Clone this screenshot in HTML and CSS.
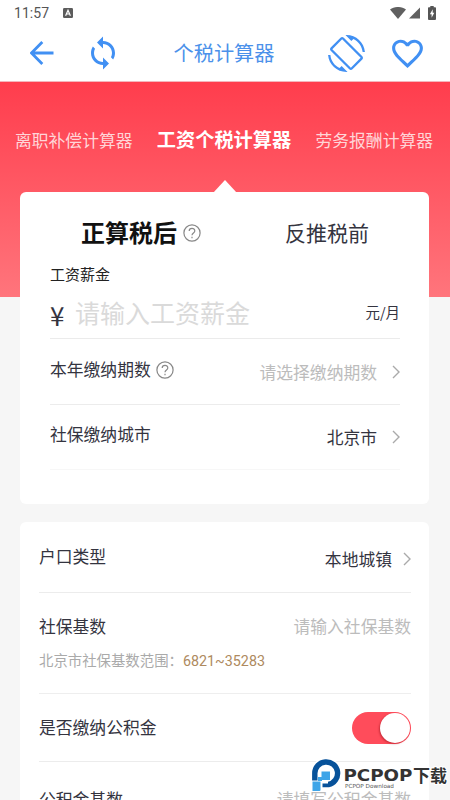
FILE: index.html
```html
<!DOCTYPE html>
<html lang="zh-CN">
<head>
<meta charset="utf-8">
<title>个税计算器</title>
<link rel="stylesheet" href="styles.css">
</head>
<body>
<div class="screen">
  <header class="top">
    <div class="status">
      <span class="clock">11:57</span>
      <svg class="badge" viewBox="0 0 10 10"><rect width="10" height="10" rx="1.2" fill="#5c5c5c"/><path d="M2.6 7.8 5 2.3l2.4 5.5M3.6 6h2.8" fill="none" stroke="#fff" stroke-width="1.2"/></svg>
      <span class="spacer"></span>
      <svg class="wifi" viewBox="0 0 16 12"><path d="M0 2.6C4.600-.9 11.400-.9 16 2.600L8 12z" fill="#606060"/></svg>
      <svg class="signal" viewBox="0 0 12 12"><path d="M12 0v12H0z" fill="#606060"/></svg>
      <svg class="battery" viewBox="0 0 8 14"><path d="M2.300 0h3.400v1.300H7.200q.8 0 .8.800V13q0 1-1 1H1q-1 0-1-1V2.100q0-.8.800-.8h1.500z" fill="#555"/><path d="M4.700 3.300 1.900 8.300h1.700v3.500l2.700-5H4.700z" fill="#fff"/></svg>
    </div>
    <nav class="nav">
      <svg class="back" viewBox="0 0 24 24"><path d="M23.500 12H1.800M12.300 1 1.500 12l10.800 11" fill="none" stroke="#4190f3" stroke-width="2.800"/></svg>
      <svg class="sync" viewBox="0 0 24 24"><path fill="#4190f3" d="M12 4V1L8 5l4 4V6c3.310 0 6 2.690 6 6 0 1.010-.25 1.970-.7 2.800l1.460 1.460C19.540 15.030 20 13.570 20 12c0-4.420-3.580-8-8-8zm0 14c-3.310 0-6-2.690-6-6 0-1.010.25-1.970.7-2.800L5.240 7.740C4.460 8.970 4 10.430 4 12c0 4.420 3.580 8 8 8v3l4-4-4-4v3z"/></svg>
      <h1 class="title">个税计算器</h1>
      <svg class="rotate" viewBox="0 0 24 24"><path fill="#4190f3" d="M16.480 2.520c3.270 1.550 5.610 4.720 5.970 8.480h1.500C23.440 4.840 18.290 0 12 0l-.66.03 3.810 3.810 1.330-1.320zm-6.250-.77c-.59-.59-1.540-.59-2.120 0L1.750 8.110c-.59.59-.59 1.540 0 2.120l12.020 12.020c.59.59 1.540.59 2.120 0l6.360-6.360c.59-.59.59-1.540 0-2.120L10.230 1.750zm4.600 19.440L2.810 9.170l6.360-6.360 12.020 12.020-6.360 6.360zm-7.310.29C4.250 19.940 1.910 16.760 1.550 13H.05C.56 19.160 5.710 24 12 24l.66-.03-3.810-3.810-1.330 1.320z"/></svg>
      <svg class="heart" viewBox="0 0 24 24"><path fill="#4190f3" d="M16.500 3c-1.740 0-3.410.81-4.500 2.090C10.910 3.810 9.240 3 7.500 3 4.420 3 2 5.420 2 8.500c0 3.780 3.400 6.860 8.550 11.540L12 21.350l1.450-1.320C18.600 15.360 22 12.280 22 8.500 22 5.420 19.580 3 16.500 3zm-4.400 15.550-.1.100-.1-.1C7.140 14.240 4 11.390 4 8.500 4 6.500 5.500 5 7.500 5c1.540 0 3.040.99 3.570 2.360h1.870C13.460 5.990 14.960 5 16.500 5c2 0 3.500 1.500 3.500 3.500 0 2.890-3.140 5.740-7.900 10.050z"/></svg>
    </nav>
  </header>

  <main class="page">
    <div class="tabs">
      <span class="tab">离职补偿计算器</span>
      <span class="tab tab-active">工资个税计算器</span>
      <span class="tab">劳务报酬计算器</span>
    </div>

    <section class="card salary">
      <div class="modes">
        <span class="mode-active">正算税后</span>
        <svg class="help" viewBox="0 0 18 18"><circle cx="9" cy="9" r="8.100"/><path d="M6.200 7.100C6.200 3.500 11.900 3.600 11.800 7 11.700 9 9 9 9 11.300M9 12.800v1.400"/></svg>
        <span class="mode">反推税前</span>
      </div>
      <div class="caption">工资薪金</div>
      <div class="amount">
        <span class="yen">¥</span>
        <span class="amount-hint">请输入工资薪金</span>
        <span class="unit">元/月</span>
      </div>
      <div class="row row-periods">
        <span class="label">本年缴纳期数</span>
        <svg class="help" viewBox="0 0 18 18"><circle cx="9" cy="9" r="8.100"/><path d="M6.200 7.100C6.200 3.500 11.900 3.600 11.800 7 11.700 9 9 9 9 11.300M9 12.800v1.400"/></svg>
        <span class="value hint">请选择缴纳期数</span>
        <svg class="chevron" viewBox="0 0 8 14"><path d="M1 1l6 6-6 6"/></svg>
      </div>
      <div class="row row-city">
        <span class="label">社保缴纳城市</span>
        <span class="value">北京市</span>
        <svg class="chevron" viewBox="0 0 8 14"><path d="M1 1l6 6-6 6"/></svg>
      </div>
    </section>

    <section class="card social">
      <div class="row row-household">
        <span class="label">户口类型</span>
        <span class="value">本地城镇</span>
        <svg class="chevron" viewBox="0 0 8 14"><path d="M1 1l6 6-6 6"/></svg>
      </div>
      <div class="base">
        <div class="base-line">
          <span class="base-label">社保基数</span>
          <span class="value hint">请输入社保基数</span>
        </div>
        <div class="range">北京市社保基数范围：<span class="range-num">6821~35283</span></div>
      </div>
      <div class="row row-fund">
        <span class="label">是否缴纳公积金</span>
        <span class="switch"><span class="knob"></span></span>
      </div>
      <div class="row row-fundbase">
        <span class="label">公积金基数</span>
        <span class="value hint">请填写公积金基数</span>
      </div>
    </section>
  </main>

  <svg class="watermark" viewBox="0 0 140 36">
    <path d="M4.800 19V15.500A11.400 11.400 0 1 1 17.500 26.500" fill="none" stroke="#fff" stroke-width="8"/>
    <path d="M4.800 22.500V15.500A11.400 11.400 0 1 1 18.500 26.500H12.500" fill="none" stroke="#07529a" stroke-width="5.400"/>
    <path d="M1 23h7v-5h3.500v-5H20.500v9H18v3.500H9.500V33H2v-7.500z" fill="#fff"/>
    <path d="M11.500 13.500H20v8.500H11.500zM8 19h4v4H8zM2.500 23.500h8v8.500q0 1-1 1h-7z" fill="#3ea5e8"/>
    <g stroke="#fff" stroke-width="2" paint-order="stroke">
      <text class="wm-name" x="33.500" y="23" textLength="69" lengthAdjust="spacingAndGlyphs">PCPOP</text>
      <text class="wm-cn" x="103" y="24" textLength="34" lengthAdjust="spacingAndGlyphs">下载</text>
      <text class="wm-sub" x="35" y="30" textLength="49" lengthAdjust="spacingAndGlyphs">PCPOP Download</text>
    </g>
  </svg>
</div>
</body>
</html>
```
FILE: styles.css
```css
* { box-sizing: border-box; }
html, body { margin: 0; }
body {
  width: 450px;
  height: 800px;
  overflow: hidden;
  font-family: "Noto Sans CJK SC", "Noto Sans", sans-serif;
  color: #34343f;
}
svg { display: block; flex: none; }
.screen {
  position: relative;
  width: 450px;
  height: 800px;
  overflow: hidden;
  background: #f6f6f6;
}
.top { height: 82px; background: #fff; border-bottom: 1px solid #f4b6bd; }
.status { display: flex; align-items: center; height: 25px; padding: 0 14px; }
.clock { font: 14px/20px Roboto, sans-serif; color: #555; letter-spacing: 0.05px; width: 49px; }
.badge { width: 10px; height: 10px; }
.spacer { flex: 1; }
.wifi { width: 16px; height: 12px; margin-right: 3px; }
.signal { width: 11px; height: 12px; margin: 1px 8px 0 0; }
.battery { width: 8px; height: 14px; }
.nav { display: flex; align-items: center; height: 56px; padding: 0 24px 0 30px; }
.back { width: 24px; height: 24px; }
.sync { width: 36px; height: 36px; margin-left: 31px; }
.title {
  flex: 1;
  margin: 0;
  padding-left: 52.5px;
  font-size: 20.2px;
  line-height: 30px;
  font-weight: 400;
  color: #4b91ea;
}
.rotate { width: 37px; height: 37px; margin-right: 24px; }
.heart { width: 37px; height: 37px; }

.page {
  height: 718px;
  padding: 0 21px 0 20px;
  background: linear-gradient(#ff3d4d, #ff757c) no-repeat 0 0 / 100% 215px;
}
.tabs {
  display: flex;
  justify-content: space-between;
  align-items: center;
  height: 110px;
  margin: 0 -4px 0 -5px;
  padding-top: 5px;
  white-space: nowrap;
}
.tab { font-size: 16.8px; color: #ffd5d8; }
.tab-active { font-size: 19.2px; font-weight: 700; color: #fff; padding-bottom: 2px; }

.card { background: #fff; border-radius: 6px; }
.salary { position: relative; height: 312px; padding: 10px 29px 0 30px; }
.salary::before {
  content: "";
  position: absolute;
  left: 193px;
  top: -12px;
  width: 24px;
  height: 13px;
  background: #fff;
  clip-path: polygon(50% 0, 100% 100%, 0 100%);
}
.modes { display: flex; align-items: center; height: 60px; padding-left: 31px; }
.mode-active { font-size: 24px; line-height: 36px; font-weight: 700; color: #111; }
.help { width: 18px; height: 18px; margin: 2px 0 0 6px; fill: none; stroke: #888; stroke-width: 1.2; }
.mode { margin-left: 84px; font-size: 21px; line-height: 30px; }
.caption { height: 24px; font-size: 15px; line-height: 24px; color: #222; }
.amount { display: flex; align-items: center; height: 53px; border-bottom: 1px solid #ebebeb; }
.yen { width: 25px; font-size: 26px; line-height: 36px; padding-top: 6px; }
.amount-hint { flex: 1; font-size: 25px; line-height: 36px; color: #dadada; }
.unit { font-size: 14.4px; line-height: 22px; }
.row { display: flex; align-items: center; border-bottom: 1px solid #ececec; }
.label { font-size: 16.8px; line-height: 24px; padding-bottom: 6px; }
.value { margin-left: auto; font-size: 16.8px; line-height: 24px; }
.hint { color: #bcbcbc; }
.chevron { width: 8px; height: 14px; margin-left: 15px; fill: none; stroke: #aaa; stroke-width: 1.4; }
.row-periods { height: 66px; }
.row-periods .help { margin: -3px 0 0 5px; }
.row-city { height: 65px; border-color: #f7f7f7; }

.social { height: 330px; margin-top: 18px; padding: 0 18px 0 19px; }
.row-household { height: 71px; padding-top: 4px; }
.row-household .chevron { margin-left: 11px; }
.base { height: 101px; padding-top: 21px; border-bottom: 1px solid #eee; }
.base-line { display: flex; height: 24px; font-size: 16.8px; line-height: 24px; }
.range { margin-top: 12px; font-size: 14.4px; line-height: 20px; color: #aaa; }
.range-num { font-family: Roboto, sans-serif; font-size: 14.3px; color: #ae8a5e; }
.row-fund { height: 68px; }
.row-fund .label { padding-bottom: 2px; }
.switch {
  display: flex;
  justify-content: flex-end;
  width: 59px;
  height: 32px;
  margin-left: auto;
  padding: 1px;
  border-radius: 16px;
  background: #ff4c5b;
}
.knob { width: 30px; height: 30px; border-radius: 50%; background: #fff; box-shadow: -1px 1px 2px rgba(120, 0, 10, 0.4); }
.row-fundbase { height: 74px; }
.row-fundbase .label { padding-bottom: 0; }

.watermark { position: absolute; left: 310px; top: 758px; width: 140px; height: 36px; }
.wm-name { font: 700 16px "DejaVu Sans", sans-serif; fill: #333; }
.wm-cn { font: 700 17px "Noto Sans CJK SC", sans-serif; fill: #333; }
.wm-sub { font: 5.6px "DejaVu Sans", sans-serif; fill: #555; stroke-width: 1px; }
```
